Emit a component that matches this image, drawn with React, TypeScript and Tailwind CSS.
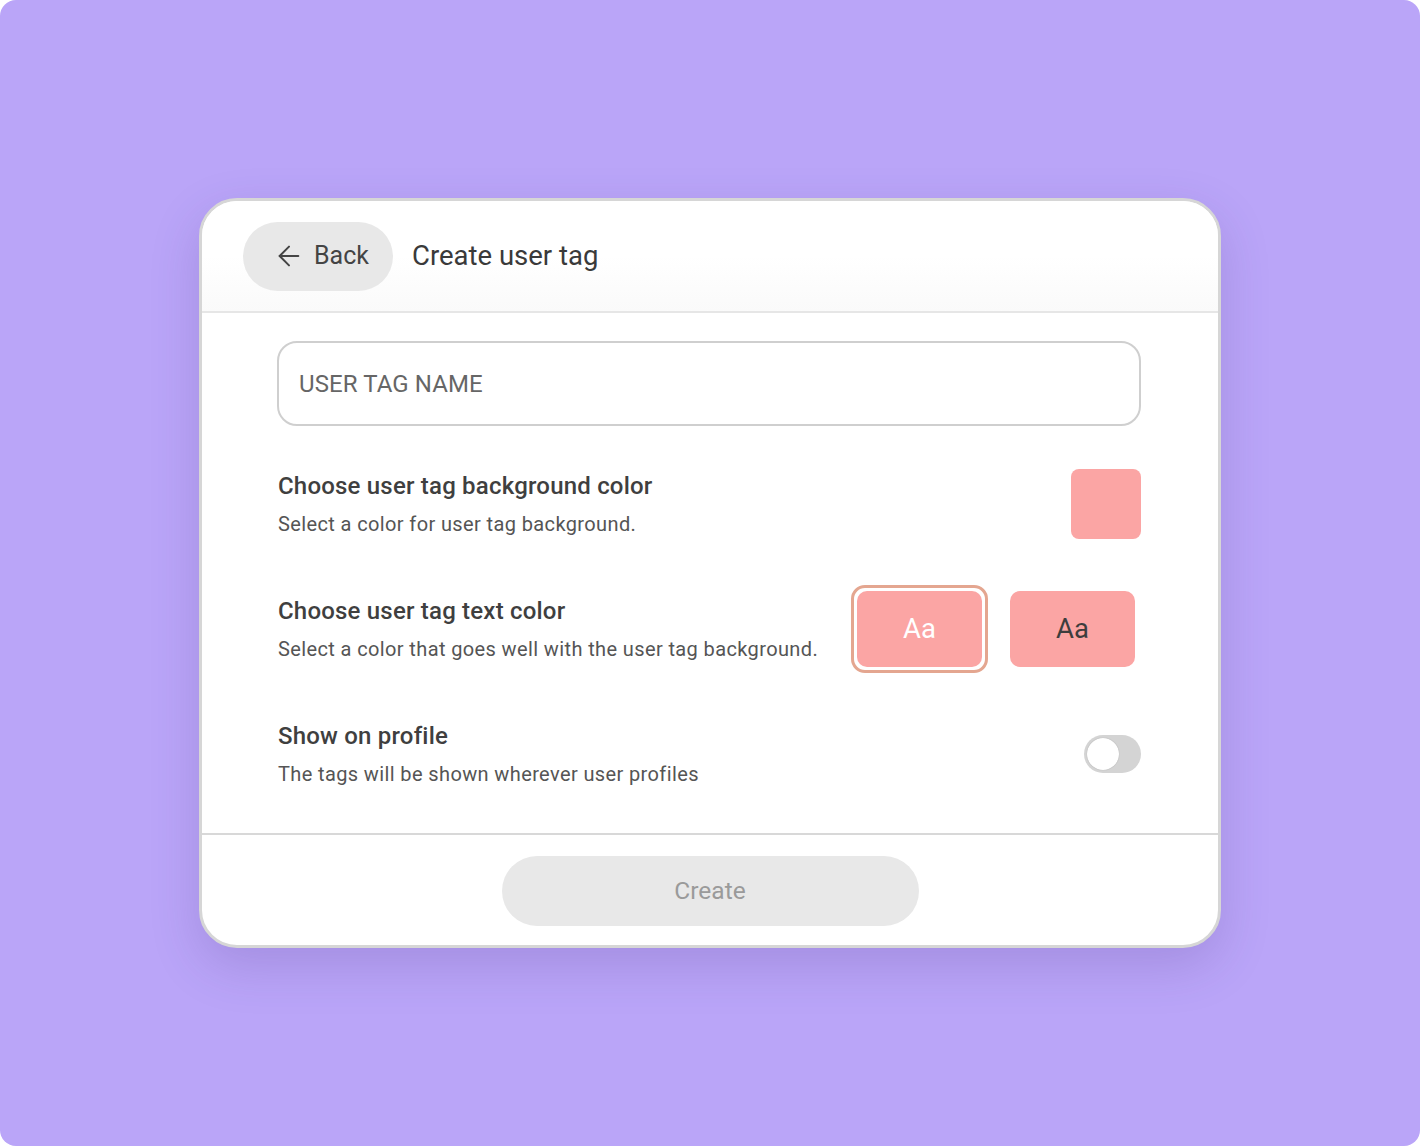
import React from "react";
import { ArrowLeft } from "lucide-react";

export default function App() {
  return (
    <div className="w-[1420px] h-[1146px] bg-white" style={{ fontFamily: "Roboto, 'Noto Sans', sans-serif" }}>
      <div className="w-full h-full rounded-[16px] bg-[#baa5f8] flex items-center justify-center">
        <div className="w-[1022px] h-[750px] bg-white rounded-[38px] border-[3px] border-[#d6d6d6] shadow-[0_18px_50px_rgba(60,40,120,0.18)] flex flex-col overflow-hidden">
          {/* Header */}
          <div className="h-[112px] shrink-0 flex items-center pl-[41px] border-b-2 border-[#e6e6e6] bg-gradient-to-b from-white via-white to-[#fafafa]">
            <button className="h-[69px] w-[150px] rounded-full bg-[#e8e8e8] flex items-center pl-[30px] gap-[9px] text-[#444] text-[25px]">
              <ArrowLeft size={32} strokeWidth={1.5} className="text-[#444]" />
              <span>Back</span>
            </button>
            <div className="ml-[19px] text-[27.5px] text-[#3a3a3a]">Create user tag</div>
          </div>

          {/* Body */}
          <div className="flex-1 flex flex-col pl-[75px] pr-[77px] pt-[28px]">
            <div className="h-[85px] rounded-[20px] border-2 border-[#cfcfcf] flex items-center px-[20px] text-[24px] tracking-[0.1px] text-[#666]">
              USER TAG NAME
            </div>

            <div className="mt-[43px] h-[70px] flex items-center justify-between pl-px">
              <div className="flex flex-col gap-[10px]">
                <div className="text-[24px] leading-[30px] tracking-[0.2px] font-medium text-[#3f3f3f]">Choose user tag background color</div>
                <div className="text-[20px] leading-[26px] tracking-[0.38px] text-[#555]">Select a color for user tag background.</div>
              </div>
              <div className="w-[70px] h-[70px] rounded-[8px] bg-[#fba5a4]" />
            </div>

            <div className="mt-[46px] h-[88px] flex items-center justify-between pl-px">
              <div className="flex flex-col gap-[10px]">
                <div className="text-[24px] leading-[30px] tracking-[0.2px] font-medium text-[#3f3f3f]">Choose user tag text color</div>
                <div className="text-[20px] leading-[26px] tracking-[0.38px] text-[#555]">Select a color that goes well with the user tag background.</div>
              </div>
              <div className="flex items-center gap-[16px]">
                <div className="w-[137px] h-[88px] rounded-[14px] border-[3px] border-[#e4a690] p-[3px]">
                  <div className="w-full h-full rounded-[10px] bg-[#fba5a4] flex items-center justify-center text-[27.5px] text-white">Aa</div>
                </div>
                <div className="w-[137px] h-[88px] rounded-[14px] border-[3px] border-transparent p-[3px]">
                  <div className="w-full h-full rounded-[10px] bg-[#fba5a4] flex items-center justify-center text-[27.5px] text-[#3d3d3d]">Aa</div>
                </div>
              </div>
            </div>

            <div className="mt-[48px] h-[66px] flex items-center justify-between pl-px">
              <div className="flex flex-col gap-[10px]">
                <div className="text-[24px] leading-[30px] tracking-[0.2px] font-medium text-[#3f3f3f]">Show on profile</div>
                <div className="text-[20px] leading-[26px] tracking-[0.38px] text-[#555]">The tags will be shown wherever user profiles</div>
              </div>
              <div className="w-[57px] h-[38px] rounded-full bg-[#d4d4d4] flex items-center pl-[3px]">
                <div className="w-[32px] h-[32px] rounded-full bg-white shadow-[0_0_1px_rgba(0,0,0,0.3)]" />
              </div>
            </div>
          </div>

          {/* Footer */}
          <div className="h-[112px] shrink-0 border-t-2 border-[#d8d8d8] flex items-center justify-center pt-[2px]">
            <button className="w-[417px] h-[70px] rounded-full bg-[#e8e8e8] text-[24.5px] text-[#9a9a9a]">Create</button>
          </div>
        </div>
      </div>
    </div>
  );
}
